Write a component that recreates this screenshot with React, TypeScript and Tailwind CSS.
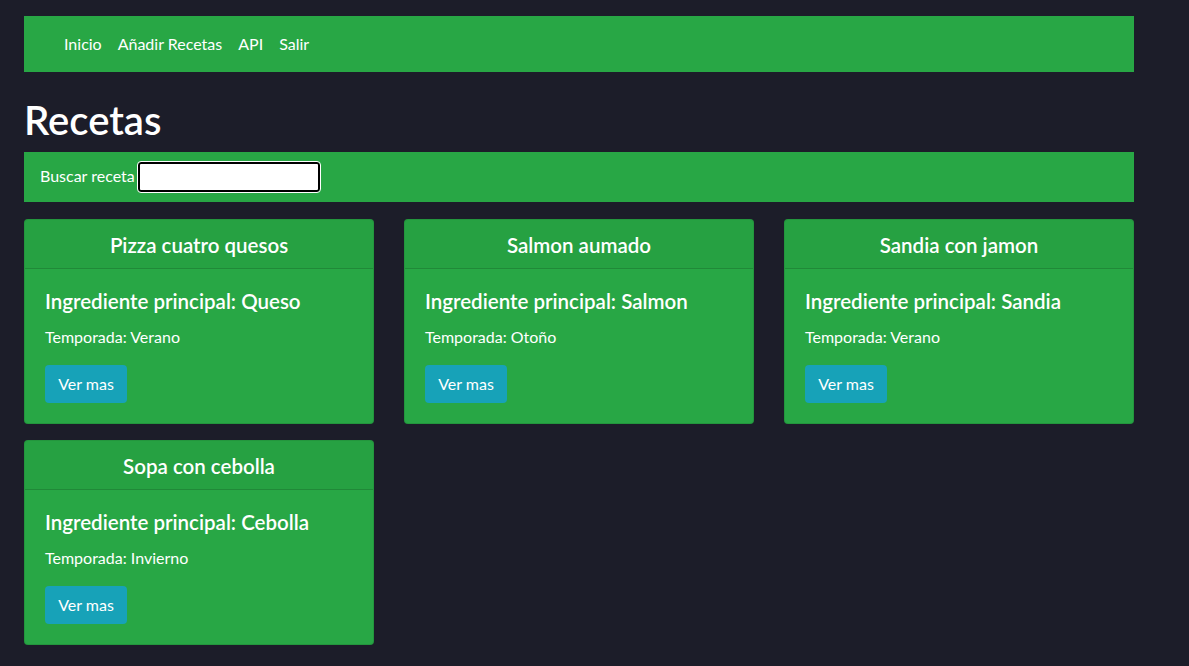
import { useState } from 'react';

type Receta = {
  nombre: string;
  ingrediente: string;
  temporada: string;
};

const RECETAS: Receta[] = [
  { nombre: 'Pizza cuatro quesos', ingrediente: 'Queso', temporada: 'Verano' },
  { nombre: 'Salmon aumado', ingrediente: 'Salmon', temporada: 'Otoño' },
  { nombre: 'Sandia con jamon', ingrediente: 'Sandia', temporada: 'Verano' },
  { nombre: 'Sopa con cebolla', ingrediente: 'Cebolla', temporada: 'Invierno' },
];

const LINKS = ['Inicio', 'Añadir Recetas', 'API', 'Salir'];

function RecetaCard({ receta }: { receta: Receta }) {
  return (
    <div className="flex flex-col rounded-[4px] border border-black/10 bg-[#28a745] text-white">
      <div className="h-[49px] border-b border-black/15 bg-black/[0.03] pt-[14px] text-center text-[20.5px] leading-[22px] font-semibold">
        {receta.nombre}
      </div>
      <div className="px-5 pt-5 pb-5">
        <h4 className="text-[20.5px] leading-[24px] font-semibold">
          Ingrediente principal: {receta.ingrediente}
        </h4>
        <p className="mt-3 text-[16px] leading-[24px]">Temporada: {receta.temporada}</p>
        <button
          type="button"
          className="mt-4 h-[38px] w-[82px] rounded-[4px] bg-[#17a2b8] text-[16px] text-white"
        >
          Ver mas
        </button>
      </div>
    </div>
  );
}

export default function App() {
  const [busqueda, setBusqueda] = useState('');

  return (
    <div
      className="min-h-[666px] bg-[#1c1d29] pt-4 text-white"
      style={{ fontFamily: 'Lato, "Noto Sans", sans-serif' }}
    >
      <div className="ml-6 w-[1110px]">
        <nav className="flex h-14 items-center gap-[16px] bg-[#28a745] pl-10 text-[16px]">
          {LINKS.map(l => (
            <a key={l} className="cursor-pointer">
              {l}
            </a>
          ))}
        </nav>

        <h1 className="mt-[24px] mb-[8px] text-[40px] leading-[48px] font-semibold">Recetas</h1>

        <div className="flex h-[50px] items-center gap-[3px] bg-[#28a745] pl-4 text-[16px]">
          <label htmlFor="buscar" className="-mt-[2px]">Buscar receta</label>
          <input
            id="buscar"
            value={busqueda}
            onChange={e => setBusqueda(e.target.value)}
            className="h-[30px] w-[182px] rounded-[3px] border-2 border-black bg-white px-1 text-black outline outline-1 outline-white"
          />
        </div>

        <div className="mt-[17px] grid grid-cols-3 gap-x-[30px] gap-y-[16px]">
          {RECETAS.map(r => (
            <RecetaCard key={r.nombre} receta={r} />
          ))}
        </div>
      </div>
    </div>
  );
}
